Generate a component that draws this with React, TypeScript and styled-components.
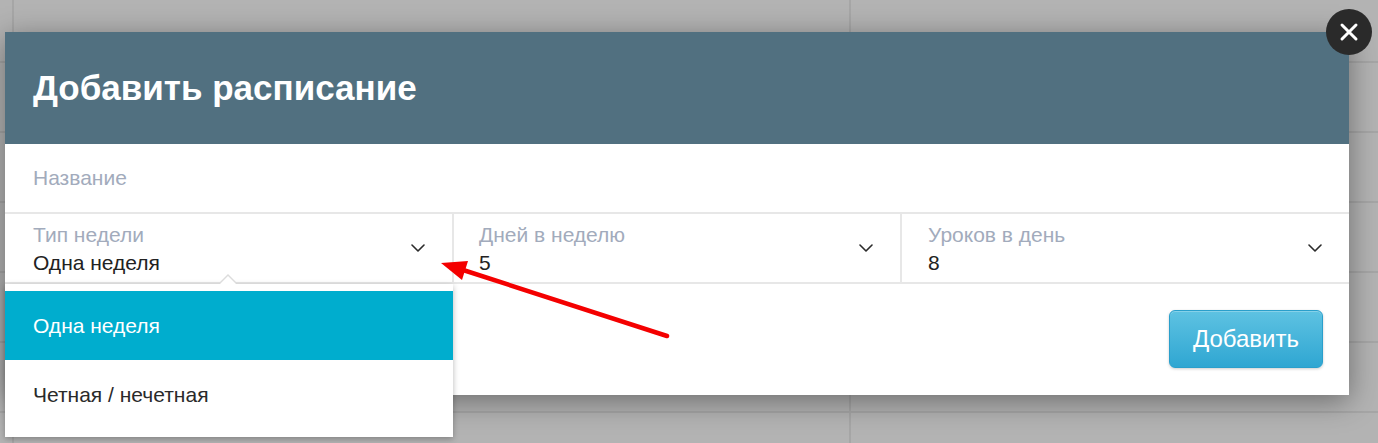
import React from 'react';
import styled, { createGlobalStyle } from 'styled-components';

const GlobalStyle = createGlobalStyle`
  html, body {
    margin: 0;
    padding: 0;
  }
  body {
    width: 1378px;
    height: 443px;
    overflow: hidden;
    font-family: "Liberation Sans", Arial, sans-serif;
    background-color: #b3b3b3;
    background-image:
      linear-gradient(to right, transparent 12px, #a6a6a6 12px, #a6a6a6 14px, transparent 14px),
      linear-gradient(to right, transparent 849px, #a6a6a6 849px, #a6a6a6 851px, transparent 851px),
      repeating-linear-gradient(to bottom, transparent 0, transparent 61px, #a6a6a6 61px, #a6a6a6 63px, transparent 63px, transparent 70px);
  }
`;

// Page and modal shell
const Page = styled.div`
  position: relative;
  padding: 32px 0 0 5px;
`;

const Modal = styled.div`
  position: relative;
  width: 1344px;
  background: #fff;
  box-shadow: 0 6px 28px rgba(0, 0, 0, 0.4);
`;

const Header = styled.div`
  height: 112px;
  background: #517080;
  display: flex;
  align-items: center;
  padding: 0 28px;
  box-sizing: border-box;
`;

const Title = styled.h2`
  margin: 0;
  font-size: 35px;
  font-weight: 700;
  color: #fff;
`;

const CloseButton = styled.button`
  position: absolute;
  top: -23px;
  right: -23px;
  width: 46px;
  height: 46px;
  border-radius: 50%;
  border: none;
  background: #2a2a2a;
  display: flex;
  align-items: center;
  justify-content: center;
  padding: 0;
  cursor: pointer;
`;

// Form rows
const NameRow = styled.div`
  height: 70px;
  box-sizing: border-box;
  border-bottom: 2px solid #e7e7e7;
  display: flex;
  align-items: center;
  padding: 0 28px;
  font-size: 21px;
  color: #a2abbc;
`;

const SelectRow = styled.div`
  display: grid;
  grid-template-columns: 449px 448px 1fr;
  height: 70px;
  box-sizing: border-box;
  border-bottom: 2px solid #e7e7e7;
`;

const SelectCell = styled.div<{ $last?: boolean; $pad: number }>`
  position: relative;
  display: flex;
  align-items: center;
  justify-content: space-between;
  padding: 0 27px 0 ${p => p.$pad}px;
  border-right: ${p => (p.$last ? 'none' : '2px solid #e7e7e7')};
`;

const SelectText = styled.div`
  align-self: flex-start;
  display: flex;
  flex-direction: column;
  padding-top: 9px;
`;

const SelectLabel = styled.span`
  font-size: 21px;
  line-height: 24px;
  color: #a2abbc;
`;

const SelectValue = styled.span`
  font-size: 21px;
  line-height: 24px;
  margin-top: 4px;
  color: #222;
`;

const Chevron = () => (
  <svg width="14" height="8" viewBox="0 0 14 8" fill="none">
    <path d="M1 1l6 6 6-6" stroke="#2b2b2b" strokeWidth="1.6" strokeLinecap="round" strokeLinejoin="round" />
  </svg>
);

// Open dropdown under the first select
const Dropdown = styled.ul`
  position: absolute;
  top: 100%;
  left: 0;
  right: -1px;
  margin: 2px 0 0;
  padding: 7px 0 8px;
  list-style: none;
  background: #fff;
  box-shadow: 0 2px 6px rgba(0, 0, 0, 0.28);
  z-index: 2;

  &::before,
  &::after {
    content: '';
    position: absolute;
    border-style: solid;
    border-color: transparent;
  }
  &::before {
    top: -10px;
    left: 214px;
    border-width: 0 9px 9px;
    border-bottom-color: #dcdcdc;
  }
  &::after {
    top: -8px;
    left: 215px;
    border-width: 0 8px 8px;
    border-bottom-color: #fff;
  }
`;

const Option = styled.li<{ $active?: boolean }>`
  height: 69px;
  display: flex;
  align-items: center;
  padding: 0 28px;
  font-size: 21px;
  color: ${p => (p.$active ? '#fff' : '#2a2a2a')};
  background: ${p => (p.$active ? '#00adce' : 'transparent')};
`;

const Footer = styled.div`
  height: 111px;
  box-sizing: border-box;
  display: flex;
  justify-content: flex-end;
  align-items: flex-start;
  padding: 26px 26px 0;
`;

const AddButton = styled.button`
  width: 154px;
  height: 58px;
  border: 1px solid #2a9fcb;
  border-radius: 6px;
  background: linear-gradient(to bottom, #5ec2e2, #2fa6d2);
  box-shadow: 0 1px 3px rgba(0, 0, 0, 0.2), inset 0 1px 0 rgba(255, 255, 255, 0.25);
  color: #fff;
  font-family: "Liberation Sans", Arial, sans-serif;
  font-size: 24px;
  cursor: pointer;
`;

// Annotation arrow drawn over the screenshot
const Annotation = styled.svg`
  position: absolute;
  left: 0;
  top: 0;
  pointer-events: none;
  z-index: 5;
`;

const selects = [
  { label: 'Тип недели', value: 'Одна неделя', pad: 28 },
  { label: 'Дней в неделю', value: '5', pad: 25 },
  { label: 'Уроков в день', value: '8', pad: 26 },
];

const App: React.FC = () => {
  return (
    <>
      <GlobalStyle />
      <Page>
        <Modal>
          <Header>
            <Title>Добавить расписание</Title>
          </Header>
          <NameRow>Название</NameRow>
          <SelectRow>
            {selects.map((s, i) => (
              <SelectCell key={s.label} $pad={s.pad} $last={i === selects.length - 1}>
                <SelectText>
                  <SelectLabel>{s.label}</SelectLabel>
                  <SelectValue>{s.value}</SelectValue>
                </SelectText>
                <Chevron />
                {i === 0 && (
                  <Dropdown>
                    <Option $active>Одна неделя</Option>
                    <Option>Четная / нечетная</Option>
                  </Dropdown>
                )}
              </SelectCell>
            ))}
          </SelectRow>
          <Footer>
            <AddButton>Добавить</AddButton>
          </Footer>
          <CloseButton aria-label="Закрыть">
            <svg width="20" height="20" viewBox="0 0 20 20">
              <path d="M3 3l14 14M17 3L3 17" stroke="#fff" strokeWidth="3" strokeLinecap="round" />
            </svg>
          </CloseButton>
        </Modal>
        <Annotation width="1378" height="443" viewBox="0 0 1378 443">
          <line x1="667" y1="336" x2="460" y2="269" stroke="#f40000" strokeWidth="4.5" strokeLinecap="round" />
          <polygon points="441,263 468,261 462,280" fill="#f40000" />
        </Annotation>
      </Page>
    </>
  );
};

export default App;
